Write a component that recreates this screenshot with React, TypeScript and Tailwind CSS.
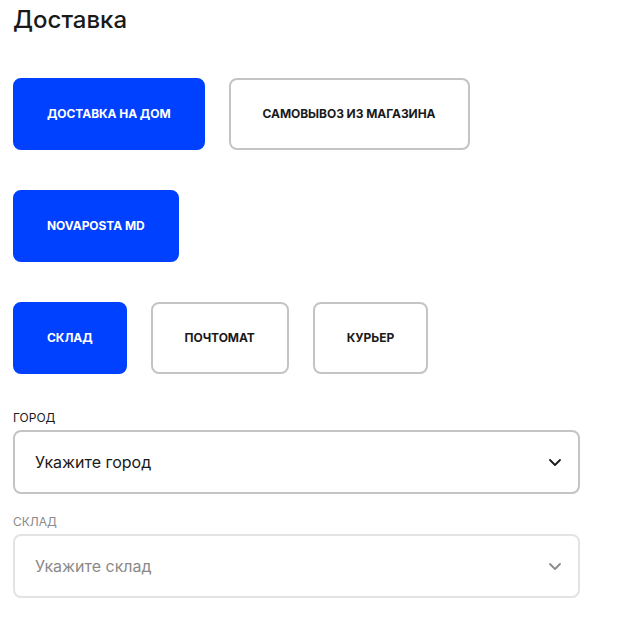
import React, { useState } from 'react';

const ChevronDown = ({ className }: { className?: string }) => (
  <svg className={className} width="14" height="14" viewBox="0 0 14 14" fill="none">
    <path d="M2 5l5 5 5-5" stroke="currentColor" strokeWidth="1.8" strokeLinecap="round" strokeLinejoin="round" />
  </svg>
);

interface OptionButtonProps {
  label: string;
  active?: boolean;
  onClick?: () => void;
}

const OptionButton: React.FC<OptionButtonProps> = ({ label, active, onClick }) => (
  <button
    onClick={onClick}
    className={`h-[72px] px-[32px] rounded-[8px] border-2 text-[12px] font-bold uppercase tracking-[-0.005em] ${
      active ? 'bg-[#0040ff] border-[#0040ff] text-white' : 'bg-white border-[#c4c4c4] text-[#1a1a1a]'
    }`}
  >
    {label}
  </button>
);

const SelectField = ({ label, placeholder, disabled }: { label: string; placeholder: string; disabled?: boolean }) => (
  <div className="flex flex-col">
    <span className={`text-[12px] leading-[16px] mb-[4px] uppercase ${disabled ? 'text-[#8a8a8a]' : 'text-[#1a1a1a]'}`}>{label}</span>
    <div
      className={`w-[567px] h-[64px] rounded-[8px] border-2 flex items-center justify-between pl-[20px] pr-[16px] ${
        disabled ? 'border-[#e3e3e3] text-[#8a8a8a]' : 'border-[#c4c4c4] text-[#1a1a1a]'
      }`}
    >
      <span className="text-[16px]">{placeholder}</span>
      <ChevronDown className={disabled ? 'text-[#8a8a8a]' : 'text-[#1a1a1a]'} />
    </div>
  </div>
);

export default function App() {
  const [method, setMethod] = useState('home');
  const [point, setPoint] = useState('sklad');

  return (
    <div className="min-h-screen bg-white pl-[13px] pt-[4px] font-['Inter','Noto_Sans',sans-serif]">
      <h2 className="text-[24px] leading-[32px] font-medium text-[#1a1a1a]">Доставка</h2>

      <div className="mt-[42px] flex flex-col gap-[40px]">
        <div className="flex gap-[24px]">
          <OptionButton label="Доставка на дом" active={method === 'home'} onClick={() => setMethod('home')} />
          <OptionButton label="Самовывоз из магазина" active={method === 'pickup'} onClick={() => setMethod('pickup')} />
        </div>
        <div className="flex">
          <OptionButton label="NovaPosta MD" active />
        </div>
        <div className="flex gap-[24px]">
          <OptionButton label="Склад" active={point === 'sklad'} onClick={() => setPoint('sklad')} />
          <OptionButton label="Почтомат" active={point === 'post'} onClick={() => setPoint('post')} />
          <OptionButton label="Курьер" active={point === 'courier'} onClick={() => setPoint('courier')} />
        </div>
      </div>

      <div className="mt-[36px] flex flex-col gap-[20px]">
        <SelectField label="Город" placeholder="Укажите город" />
        <SelectField label="Склад" placeholder="Укажите склад" disabled />
      </div>
    </div>
  );
}
